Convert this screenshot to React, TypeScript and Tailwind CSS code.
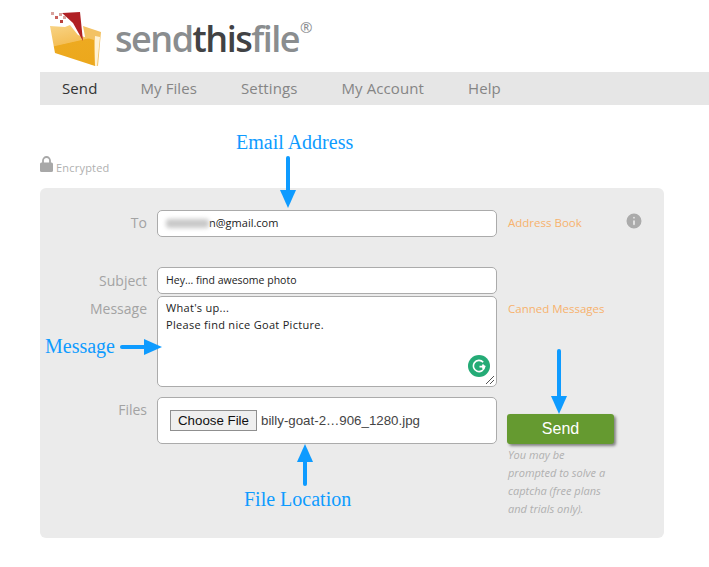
import { Info } from "lucide-react";

const uiFont = "font-['Open_Sans','Noto_Sans',sans-serif]";
const noteFont = "font-['Liberation_Serif',serif] text-[#0e9bff]";

function Logo() {
  return (
    <svg width="54" height="56" viewBox="0 0 54 56" className="shrink-0">
      <defs>
        <linearGradient id="folderFront" x1="0" y1="0" x2="0.25" y2="1">
          <stop offset="0" stopColor="#f8d486" />
          <stop offset="0.5" stopColor="#f4bf58" />
          <stop offset="0.52" stopColor="#edaa20" />
          <stop offset="1" stopColor="#eca81d" />
        </linearGradient>
      </defs>
      <path d="M33 14 L51 20 L48 54 L40 52 Z" fill="#f3c264" />
      <path d="M45 24 L50 25 L47 54 L44 53 Z" fill="#fff2d4" />
      <path d="M0 14 L15 15 L20 13 L28 23 L44 28 L45 54 L5 41 Z" fill="url(#folderFront)" />
      <path d="M12 1 L30 0 L33 29 L23 11 Z" fill="#b02024" />
      <rect x="1" y="0" width="3" height="3" fill="#d9a29c" />
      <rect x="5" y="4" width="3" height="3" fill="#c9605c" />
      <rect x="9" y="1" width="3" height="3" fill="#d9a29c" />
      <rect x="10" y="8" width="3" height="3" fill="#b8403c" />
      <rect x="13" y="4" width="3" height="3" fill="#d9a29c" />
    </svg>
  );
}

function Arrow({ dir, len, className }: { dir: "up" | "down" | "right"; len: number; className: string }) {
  // drawn pointing right, then rotated
  const rot = dir === "right" ? 0 : dir === "down" ? 90 : -90;
  const w = dir === "right" ? len : 16;
  const h = dir === "right" ? 16 : len;
  const transform =
    dir === "right" ? undefined : `translate(${w / 2} ${h / 2}) rotate(${rot}) translate(${-len / 2} -8)`;
  return (
    <svg width={w} height={h} viewBox={`0 0 ${w} ${h}`} className={`absolute ${className}`}>
      <g transform={transform}>
        <rect x="0" y="6" width={len - 12} height="4" rx="2" fill="#0e9bff" />
        <path d={`M${len - 18} 0 L${len} 8 L${len - 18} 16 Z`} fill="#0e9bff" />
      </g>
    </svg>
  );
}

const labelClass = "w-[107px] shrink-0 text-right text-[#a3a3a3]";
const boxClass = "w-[340px] shrink-0 rounded-[5px] border border-[#ababab] bg-white";

export default function App() {
  return (
    <div className={`relative h-[567px] w-[709px] overflow-hidden bg-white ${uiFont}`}>
      {/* Logo */}
      <div className="flex h-[72px] items-start pl-[50px] pt-[12px]">
        <Logo />
        <div className="ml-[11px] mt-[4px] flex items-start text-[36px] leading-[46px] font-semibold tracking-[-1.5px]">
          <span className="text-[#8a8d8f]">send</span>
          <span className="text-[#414244]">this</span>
          <span className="text-[#8a8d8f]">file</span>
          <span className="ml-[1px] mt-[-4px] text-[15px] leading-[30px] font-normal text-[#8a8d8f]">®</span>
        </div>
      </div>

      {/* Nav */}
      <nav className="ml-[40px] flex h-[33px] items-center gap-[44px] bg-[#e6e6e6] pl-[22px] text-[15px] tracking-[0.1px] text-[#858585]">
        <span className="mr-[-1px] text-[#333]">Send</span>
        <span>My Files</span>
        <span>Settings</span>
        <span>My Account</span>
        <span>Help</span>
      </nav>

      {/* Encrypted */}
      <div className="ml-[40px] mt-[51px] flex h-[18px] items-end gap-[3px] text-[11px] leading-[13px] tracking-[0.2px] text-[#b0b0b0]">
        <svg width="13" height="16" viewBox="0 0 13 16" className="mb-[2px] shrink-0">
          <path d="M3 7 V4.5 A3.5 3.5 0 0 1 10 4.5 V7" fill="none" stroke="#a8a8a8" strokeWidth="1.8" />
          <rect x="0" y="6.5" width="13" height="9.5" rx="1.5" fill="#a8a8a8" />
        </svg>
        <span>Encrypted</span>
      </div>

      {/* Form panel */}
      <div className="relative ml-[40px] mt-[14px] h-[350px] w-[624px] rounded-[6px] bg-[#ebebeb] pt-[22px] text-[14px]">
        <div className="flex h-[27px] items-center gap-[10px]">
          <label className={`${labelClass} mt-[-2px]`}>To</label>
          <div className={`${boxClass} flex h-[27px] items-center pl-[8px] text-[11px] text-[#222]`}>
            <span className="h-[9px] w-[43px] rounded-[3px] bg-[#c9c9c9] blur-[2px]" />
            <span>n@gmail.com</span>
          </div>
          <a className="ml-[1px] mt-[-2px] text-[11.5px] text-[#f7b26d]">Address Book</a>
          <Info size={20} className="ml-[32px] mt-[-5px] fill-[#ababab] text-[#ebebeb]" />
        </div>

        <div className="mt-[30px] flex h-[27px] items-center gap-[10px]">
          <label className={labelClass}>Subject</label>
          <div className={`${boxClass} flex h-[27px] items-center pl-[8px] text-[10.5px] text-[#222]`}>
            Hey... find awesome photo
          </div>
        </div>

        <div className="mt-[2px] flex h-[91px] items-start gap-[10px]">
          <label className={`${labelClass} pt-[2px]`}>Message</label>
          <div className={`${boxClass} relative h-[91px] px-[8px] pt-[2px] text-[11px] leading-[17px] tracking-[0.3px] text-[#222]`}>
            <p>What's up...</p>
            <p>Please find nice Goat Picture.</p>
            <span className="absolute bottom-[9px] right-[6px] flex h-[22px] w-[22px] items-center justify-center rounded-full bg-[#24ab76]">
              <svg width="14" height="14" viewBox="0 0 14 14" fill="none" stroke="white" strokeWidth="1.6">
                <path d="M11.2 3.2 A5.6 5.6 0 1 0 12.6 7.6 L7.5 7.6 M10.4 5.6 L12.6 7.6 L10.4 9.6" />
              </svg>
            </span>
            <svg width="10" height="10" viewBox="0 0 10 10" className="absolute bottom-[1px] right-[1px]" stroke="#555">
              <path d="M1 9 L9 1 M5 9 L9 5" />
            </svg>
          </div>
          <a className="ml-[1px] pt-[4px] text-[11.5px] text-[#f7b26d]">Canned Messages</a>
        </div>

        <div className="mt-[10px] flex items-start gap-[10px]">
          <label className={`${labelClass} pt-[2px]`}>Files</label>
          <div className={`${boxClass} flex h-[47px] items-center pl-[12px] font-['Liberation_Sans',sans-serif] text-[13.3px] text-[#444]`}>
            <span className="mr-[4px] flex h-[21px] w-[87px] items-center justify-center border border-[#8f8f8f] bg-[#efefef] text-[#111]">
              Choose File
            </span>
            billy-goat-2…906_1280.jpg
          </div>
          <div className="w-[107px] pt-[17px]">
            <button className="h-[30px] w-[107px] rounded-[3px] bg-[#659a30] font-['Liberation_Sans',sans-serif] text-[16px] text-white shadow-[2px_2px_3px_rgba(0,0,0,0.45)]">
              Send
            </button>
            <p className="mt-[2px] pl-[1px] text-[11px] leading-[18px] text-[#b0b0b0] italic">
              You may be prompted to solve a captcha (free plans and trials only).
            </p>
          </div>
        </div>
      </div>

      {/* Annotations */}
      <span className={`absolute left-[236px] top-[129px] text-[20px] leading-[26px] ${noteFont}`}>Email Address</span>
      <Arrow dir="down" len={52} className="left-[280px] top-[156px]" />
      <span className={`absolute left-[45px] top-[333px] text-[20px] leading-[26px] ${noteFont}`}>Message</span>
      <Arrow dir="right" len={42} className="left-[120px] top-[339px]" />
      <Arrow dir="down" len={65} className="left-[551px] top-[349px]" />
      <Arrow dir="up" len={42} className="left-[297px] top-[444px]" />
      <span className={`absolute left-[244px] top-[486px] text-[20px] leading-[26px] ${noteFont}`}>File Location</span>
    </div>
  );
}
